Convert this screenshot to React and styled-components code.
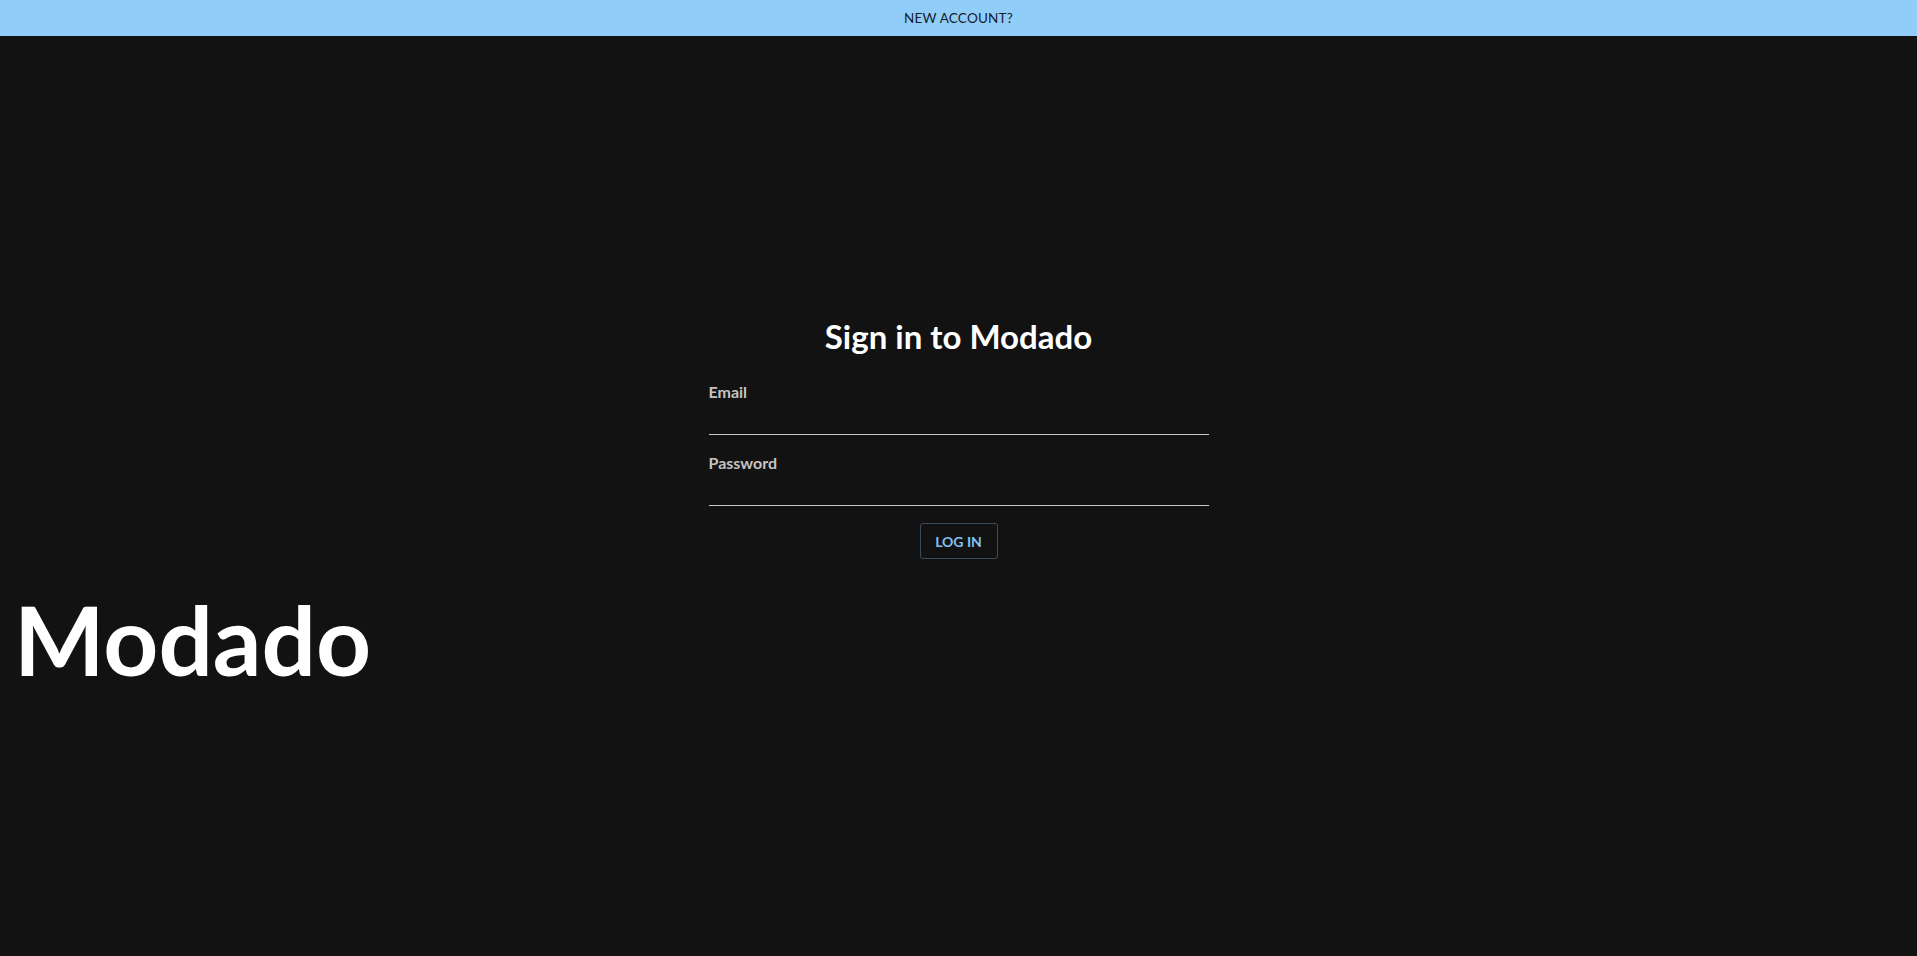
import React from "react";
import styled, { createGlobalStyle } from "styled-components";

const GlobalStyle = createGlobalStyle`
 html,
 body {
  margin: 0;
  padding: 0;
  background-color: #121212;
  font-family: "Lato", "Noto Sans", sans-serif;
 }
`;

const Page = styled.div`
 display: flex;
 flex-direction: column;
 min-height: 956px;
 background-color: #121212;
 color: #fff;
`;

const TopBar = styled.header`
 height: 36px;
 display: flex;
 align-items: center;
 justify-content: center;
 background-color: #90cdf9;
`;

const TopLink = styled.a`
 color: #15202b;
 font-size: 13.5px;
 letter-spacing: 0.2px;
 text-decoration: none;
 cursor: pointer;
`;

const Main = styled.main`
 display: flex;
 flex-direction: column;
 padding-top: 280px;
`;

const Form = styled.form`
 display: flex;
 flex-direction: column;
 width: 500px;
 margin: 0 auto;
`;

const Headline = styled.h1`
 margin: 0 0 25px;
 text-align: center;
 font-size: 33px;
 font-weight: 700;
 line-height: 41px;
 color: #fff;
`;

const Label = styled.label`
 font-size: 16px;
 line-height: 20px;
 font-weight: 700;
 color: #c4c4c4;
`;

const Input = styled.input`
 height: 32px;
 margin-bottom: ${(p) => p.$space || 0}px;
 padding: 0;
 background: transparent;
 border: none;
 border-bottom: 1px solid #c8c8c8;
 color: #fff;
 font-size: 16px;
 font-family: inherit;

 &:focus {
  outline: none;
 }
`;

const Button = styled.button`
 align-self: center;
 height: 36px;
 width: 78px;
 margin-top: 17px;
 background-color: transparent;
 border: 1px solid #3d4b59;
 border-radius: 3px;
 color: #82c2f2;
 font-family: inherit;
 font-size: 14px;
 font-weight: 700;
 cursor: pointer;
`;

const Brand = styled.div`
 margin: 22px 0 0 14px;
 font-size: 96px;
 font-weight: 700;
 line-height: 116px;
 color: #fff;
`;

const App = () => {
 return (
  <>
   <GlobalStyle />
   <Page>
    <TopBar>
     <TopLink>NEW ACCOUNT?</TopLink>
    </TopBar>
    <Main>
     <Form onSubmit={(e) => e.preventDefault()}>
      <Headline>Sign in to Modado</Headline>
      <Label htmlFor="email">Email</Label>
      <Input id="email" type="email" $space={18} />
      <Label htmlFor="password">Password</Label>
      <Input id="password" type="password" />
      <Button type="submit">LOG IN</Button>
     </Form>
     <Brand>Modado</Brand>
    </Main>
   </Page>
  </>
 );
};

export default App;
